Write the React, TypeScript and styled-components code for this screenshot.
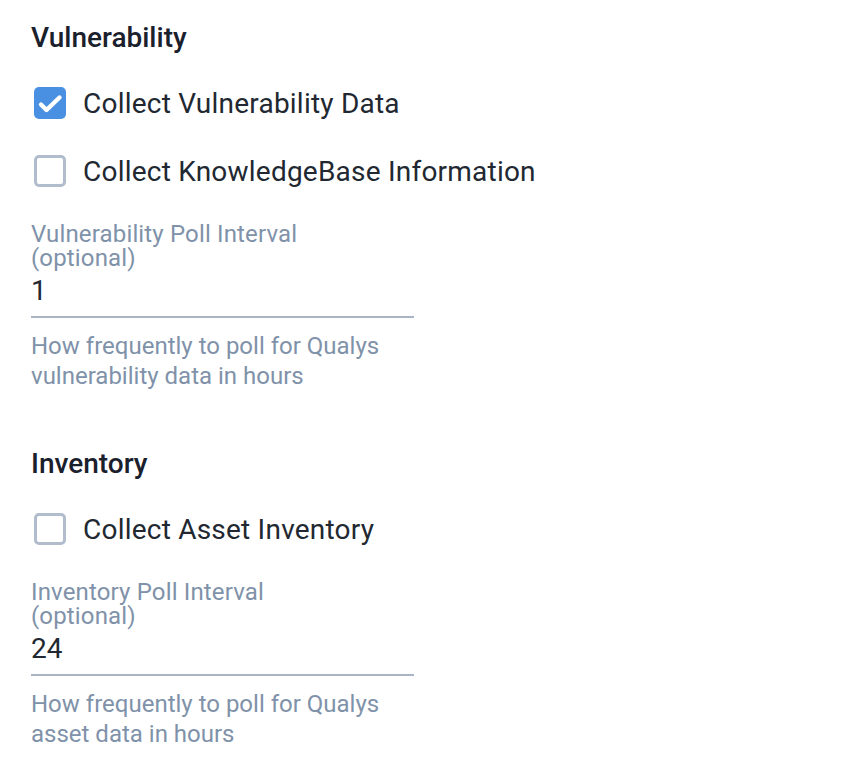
import React, { useState } from "react";
import styled, { createGlobalStyle } from "styled-components";

const GlobalStyle = createGlobalStyle`
  * { box-sizing: border-box; }
  body {
    margin: 0;
    background: #ffffff;
    font-family: Roboto, "Noto Sans", sans-serif;
  }
`;

const Page = styled.div`
  padding: 24px 30px 0 31px;
  display: flex;
  flex-direction: column;
`;

const Section = styled.section`
  display: flex;
  flex-direction: column;
  margin-bottom: 59px;
`;

const Heading = styled.h2`
  margin: 0 0 35px;
  font-size: 28px;
  line-height: 28px;
  font-weight: 500;
  color: #1a202c;
`;

const CheckRow = styled.label`
  display: flex;
  align-items: center;
  gap: 17px;
  height: 32px;
  margin-bottom: 36px;
  margin-left: 3px;
  cursor: pointer;
  font-size: 28px;
  letter-spacing: 0.22px;
  color: #222831;
  &:last-of-type {
    margin-bottom: 35px;
  }
`;

const Box = styled.span<{ $checked: boolean }>`
  width: 32px;
  height: 32px;
  border-radius: 5px;
  display: flex;
  flex-shrink: 0;
  background: ${(p) => (p.$checked ? "#4a90e2" : "#ffffff")};
  border: ${(p) => (p.$checked ? "none" : "3px solid #b1bdcc")};
`;

const Field = styled.div`
  display: flex;
  flex-direction: column;
  width: 383px;
`;

const FieldLabel = styled.label`
  font-size: 24px;
  line-height: 24px;
  letter-spacing: 0.15px;
  color: #8092a9;
  width: 300px;
`;

const ValueInput = styled.input`
  border: none;
  border-bottom: 2px solid #a8b4c4;
  outline: none;
  padding: 5px 0 11px;
  margin: 0;
  font-family: inherit;
  font-size: 28px;
  line-height: 30px;
  height: 48px;
  color: #222831;
  background: transparent;
`;

const Help = styled.p`
  margin: 13px 0 0;
  font-size: 24px;
  line-height: 30px;
  color: #8092a9;
  width: 383px;
`;

const Check = ({ label, initial }: { label: string; initial: boolean }) => {
  const [on, setOn] = useState(initial);
  return (
    <CheckRow onClick={() => setOn(!on)}>
      <Box $checked={on}>
        {on && (
          <svg width="32" height="32" viewBox="0 0 32 32" fill="none">
            <path
              d="M7 17.5l5.5 5.5L25.5 10.5"
              stroke="#fff"
              strokeWidth="4.4"
              strokeLinecap="round"
              strokeLinejoin="round"
            />
          </svg>
        )}
      </Box>
      {label}
    </CheckRow>
  );
};

export default function App() {
  return (
    <>
      <GlobalStyle />
      <Page>
        <Section>
          <Heading>Vulnerability</Heading>
          <Check label="Collect Vulnerability Data" initial={true} />
          <Check label="Collect KnowledgeBase Information" initial={false} />
          <Field>
            <FieldLabel>Vulnerability Poll Interval (optional)</FieldLabel>
            <ValueInput defaultValue="1" />
            <Help>How frequently to poll for Qualys vulnerability data in hours</Help>
          </Field>
        </Section>
        <Section>
          <Heading>Inventory</Heading>
          <Check label="Collect Asset Inventory" initial={false} />
          <Field>
            <FieldLabel>Inventory Poll Interval (optional)</FieldLabel>
            <ValueInput defaultValue="24" />
            <Help>How frequently to poll for Qualys asset data in hours</Help>
          </Field>
        </Section>
      </Page>
    </>
  );
}
